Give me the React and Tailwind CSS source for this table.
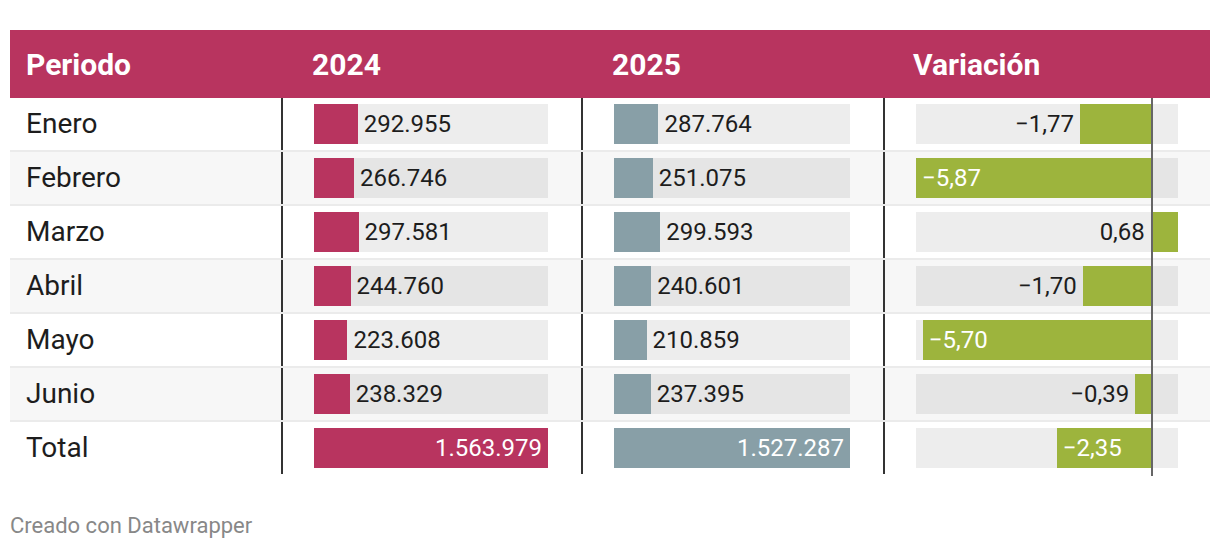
const rows = [
  { name: "Enero", a: 292955, b: 287764, v: -1.77, inside: false },
  { name: "Febrero", a: 266746, b: 251075, v: -5.87, inside: true },
  { name: "Marzo", a: 297581, b: 299593, v: 0.68, inside: false },
  { name: "Abril", a: 244760, b: 240601, v: -1.7, inside: false },
  { name: "Mayo", a: 223608, b: 210859, v: -5.7, inside: true },
  { name: "Junio", a: 238329, b: 237395, v: -0.39, inside: false },
  { name: "Total", a: 1563979, b: 1527287, v: -2.35, inside: true },
];

const MAX_A = 1563979;
const MAX_B = 1527287;
const V_MIN = -5.87;
const V_MAX = 0.68;
const V_WIDTH = 262;
const ZERO = (-V_MIN / (V_MAX - V_MIN)) * V_WIDTH;

const fmtInt = (n) => n.toLocaleString("de-DE");
const fmtVar = (n) =>
  (n < 0 ? "\u2212" : "") + Math.abs(n).toFixed(2).replace(".", ",");

function ValueBar({ value, max, width, color }) {
  const w = (value / max) * width;
  const full = w > width - 90;
  return (
    <div
      className="relative h-[40px] bg-black/[0.07]"
      style={{ width }}
    >
      <div
        className="absolute left-0 top-0 h-full"
        style={{ width: w, backgroundColor: color }}
      />
      {full ? (
        <span className="absolute right-[6px] top-0 flex h-full items-center text-white">
          {fmtInt(value)}
        </span>
      ) : (
        <span
          className="absolute top-0 flex h-full items-center text-[#1d1d1d]"
          style={{ left: w + 6 }}
        >
          {fmtInt(value)}
        </span>
      )}
    </div>
  );
}

function VarBar({ value, inside }) {
  const len = Math.abs(value) * (V_WIDTH / (V_MAX - V_MIN));
  const left = value < 0 ? ZERO - len : ZERO;
  return (
    <div className="relative h-[40px] w-[262px] bg-black/[0.07]">
      <div
        className="absolute top-0 h-full bg-[#9db43d]"
        style={{ left, width: len }}
      />
      {inside ? (
        <span
          className="absolute top-0 flex h-full items-center text-white"
          style={{ left: left + 6 }}
        >
          {fmtVar(value)}
        </span>
      ) : (
        <span
          className="absolute top-0 flex h-full items-center text-[#1d1d1d]"
          style={{ right: V_WIDTH - left + 6 }}
        >
          {fmtVar(value)}
        </span>
      )}
    </div>
  );
}

export default function App() {
  return (
    <div
      className="h-[550px] w-[1220px] bg-white pt-[30px]"
      style={{ fontFamily: "Roboto, 'Liberation Sans', sans-serif" }}
    >
      <div className="mx-[10px] w-[1200px]">
        {/* header */}
        <div className="grid h-[68px] grid-cols-[271px_300px_302px_327px] items-center bg-[#b8345f] text-[30px] font-bold text-white">
          <div className="pl-[16px]">Periodo</div>
          <div className="pl-[31px]">2024</div>
          <div className="pl-[31px]">2025</div>
          <div className="pl-[30px]">Variación</div>
        </div>

        {/* body */}
        {rows.map((r, i) => (
          <div
            key={r.name}
            className={`grid grid-cols-[271px_300px_302px_327px] text-[24px] ${
              i % 2 === 1 ? "bg-[#f7f7f7]" : "bg-white"
            } ${i < rows.length - 1 ? "border-b-2 border-[#ebebeb]" : ""}`}
          >
            <div className="flex h-[52px] items-center pl-[16px] text-[28px] text-[#1d1d1d]">
              {r.name}
            </div>
            <div className="flex h-[52px] items-center border-l-2 border-[#333] pl-[31px]">
              <ValueBar value={r.a} max={MAX_A} width={234} color="#b8345f" />
            </div>
            <div className="flex h-[52px] items-center border-l-2 border-[#333] pl-[31px]">
              <ValueBar value={r.b} max={MAX_B} width={236} color="#889fa7" />
            </div>
            <div className="relative flex h-[52px] items-center border-l-2 border-[#333] pl-[31px]">
              <VarBar value={r.v} inside={r.inside} />
              <div
                className="absolute top-0 bottom-[-2px] w-[2px] bg-[#666]"
                style={{ left: 33 + ZERO - 2 }}
              />
            </div>
          </div>
        ))}
      </div>

      <div className="mt-[35px] pl-[10px] text-[22px] leading-[33px] text-[#888]">
        Creado con Datawrapper
      </div>
    </div>
  );
}
